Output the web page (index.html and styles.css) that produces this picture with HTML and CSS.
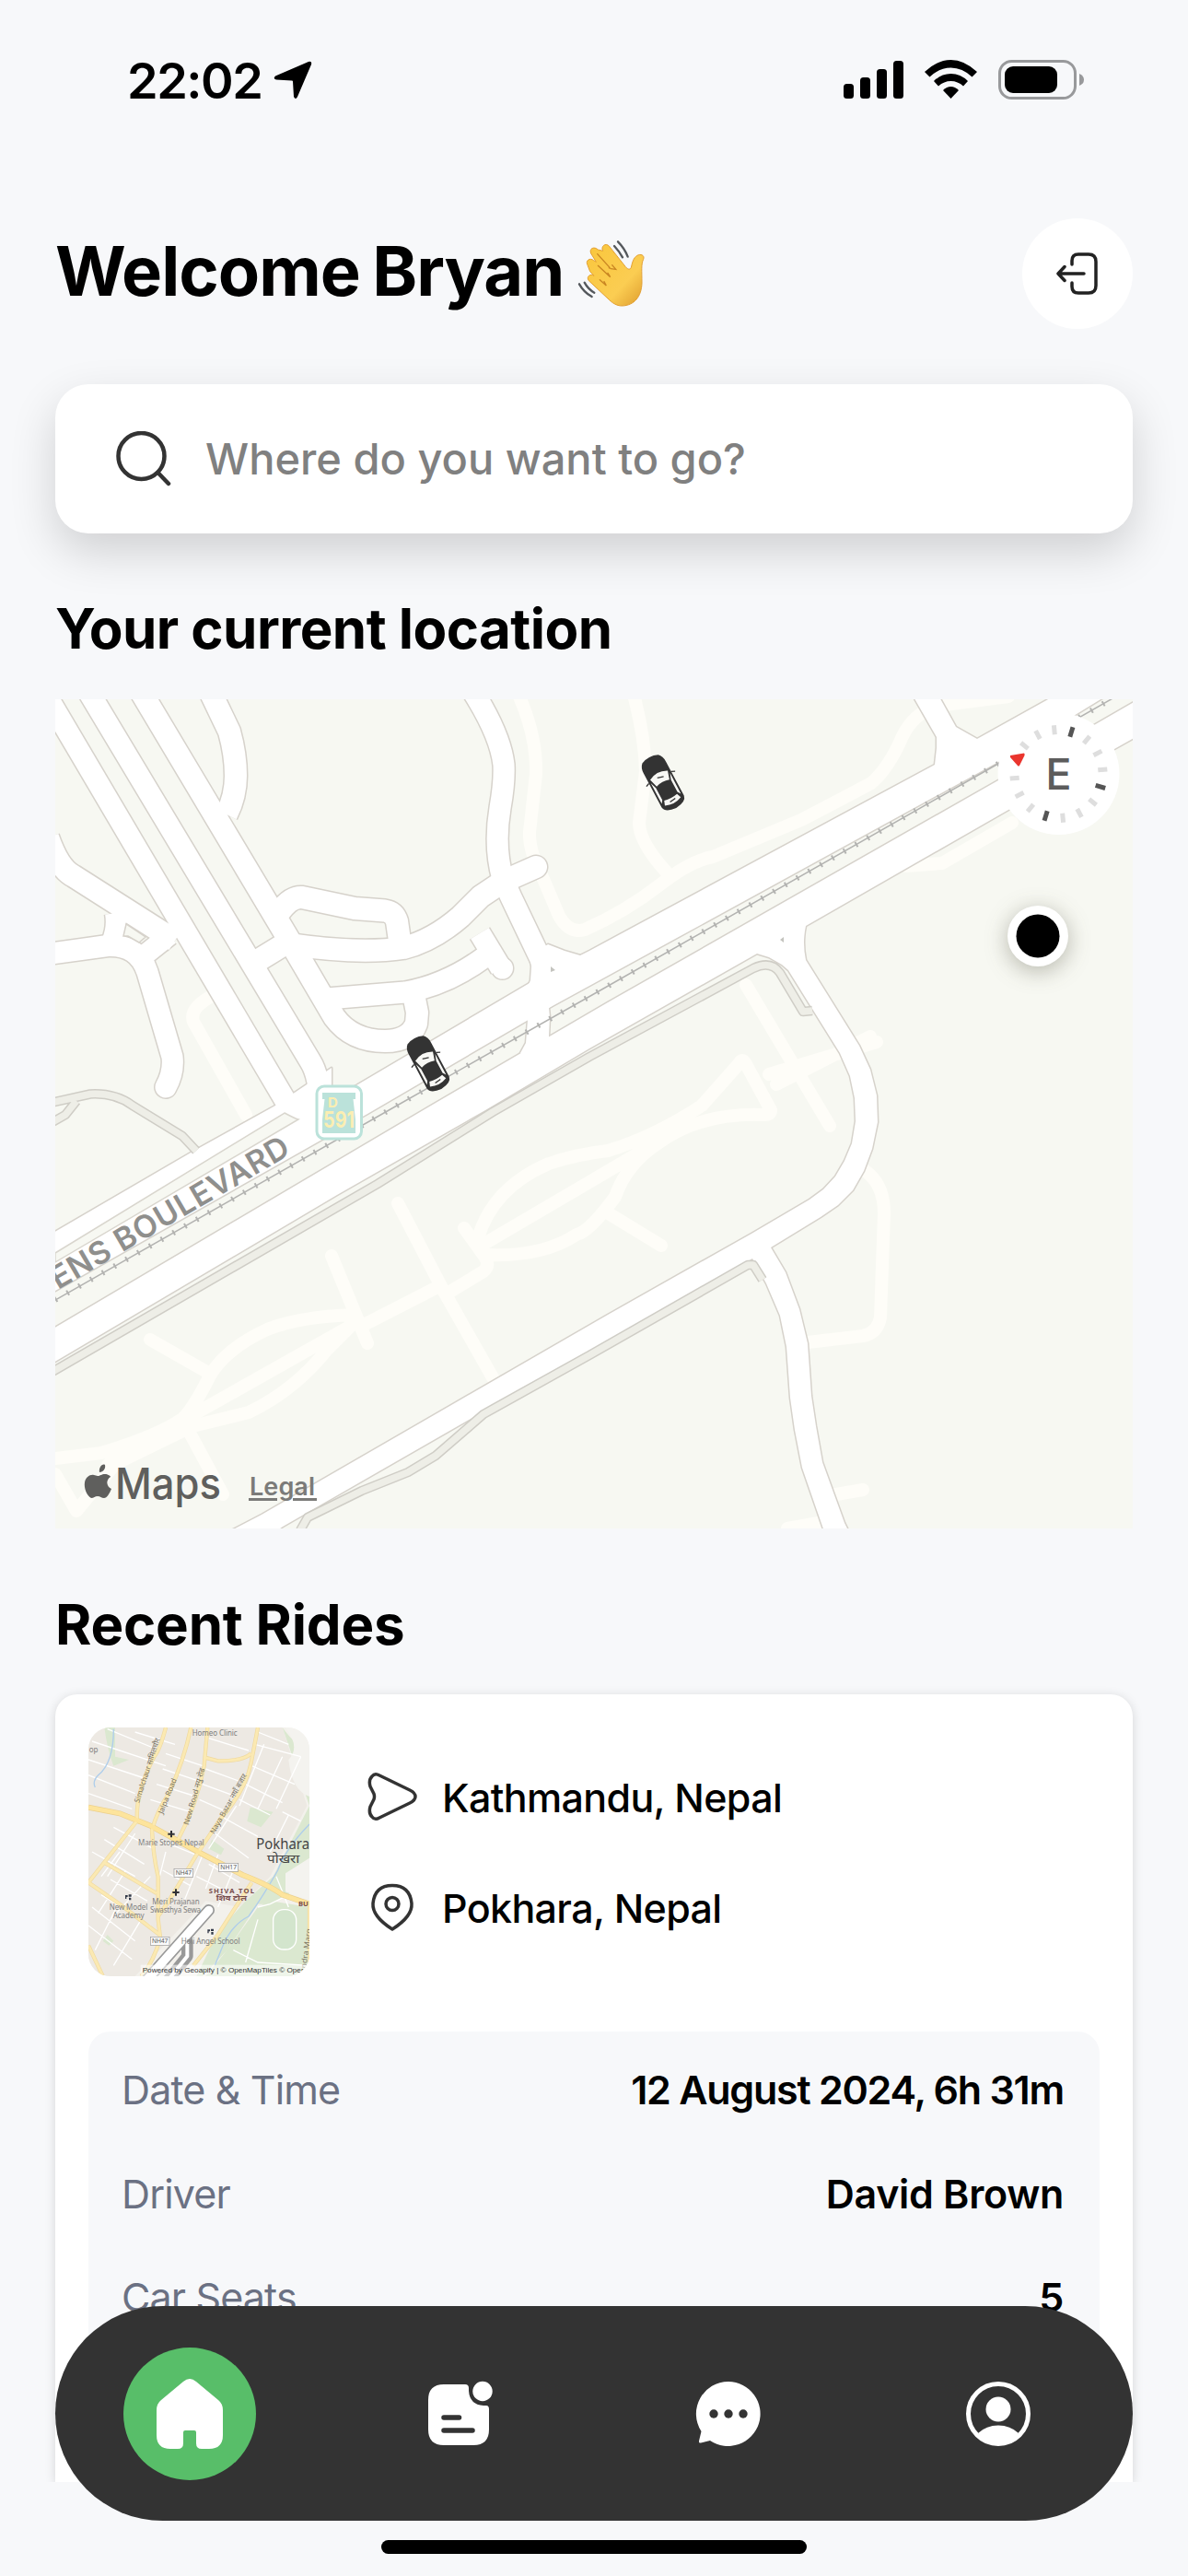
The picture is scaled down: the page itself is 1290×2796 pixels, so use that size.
FILE: index.html
```html
<!DOCTYPE html>
<html lang="en">
<head>
<meta charset="utf-8">
<title>Ride home</title>
<link rel="stylesheet" href="styles.css">
</head>
<body>
<div class="screen">
  <div class="status">
    <div class="status-left">
      <span class="time">22:02</span>
      <svg class="loc" viewBox="0 0 42 42"><path d="M38 1Q42 0 41 4L26 39Q24 43 22 39L21 22.500Q21 21.500 20 21.500L3 20.500Q-1 19.500 2 16.500Z"/></svg>
    </div>
    <svg class="status-icons" viewBox="0 0 264 44">
      <rect x="0" y="26" width="11" height="16" rx="3.500"/><rect x="18" y="19" width="11" height="23" rx="3.500"/><rect x="36" y="10" width="11" height="32" rx="3.500"/><rect x="54" y="1" width="11" height="41" rx="3.500"/>
      <path d="M88 13Q102 0 116.500 0T145 13L139.500 18.500Q129 8.500 116.500 8.500T93.500 18.500Z"/>
      <path d="M98 23Q106 15 116.500 15T135 23L130 28.500Q124 23 116.500 23T103 28.500Z"/>
      <path d="M108 33Q112 29 116.500 29T125 33L116.500 42Z"/>
      <rect class="bat-case" x="169.500" y="1.500" width="82" height="40" rx="13"/>
      <rect x="175" y="7" width="57" height="29" rx="9"/>
      <path class="bat-tip" d="M256 15Q261 17 261 21.500T256 28Z"/>
    </svg>
  </div>

  <header class="header">
    <h1>Welcome Bryan</h1>
    <svg class="wave" viewBox="0 0 330 300">
      <defs><linearGradient id="skin" x1="0" y1="0" x2="1" y2="1"><stop offset="0" stop-color="#f9c63c"/><stop offset=".65" stop-color="#fbcd52"/><stop offset="1" stop-color="#dd9b2c"/></linearGradient></defs>
      <path class="hand" d="M134 76C126 62 142 48 154 60L208 128C216 138 225 138 227 126C231 108 236 94 250 89C262 86 270 93 266 103C258 120 261 140 261 180C260 225 236 254 196 255C178 255 164 245 150 231L88 173C78 160 94 148 105 157L92 143L84 122C76 107 92 97 104 107L112 112L95 84C88 68 106 60 118 72Z"/>
      <path class="finger-line" d="M116 86L154 128Q160 135 154 131M160 134L176 136L164 122M118 124L158 161L150 148M124 170L145 189L138 176"/>
      <path class="motion" d="M171 60Q188 78 198 97M183 46Q205 68 215 95M57 184Q72 211 98 225M74 179Q86 201 106 212"/>
    </svg>
    <button class="logout" aria-label="Log out">
      <svg viewBox="0 0 48 48"><path d="M17 14V10Q17 3 24 3H35Q43 3 43 11V37Q43 45 35 45H24Q17 45 17 38V34M30 24H2M9 16.500L2 24L9 31.500"/></svg>
    </button>
  </header>

  <div class="search">
    <svg class="search-icon" viewBox="0 0 60 60"><circle cx="27.500" cy="27" r="25"/><path d="M45.500 45L57 57"/></svg>
    <span>Where do you want to go?</span>
  </div>

  <h2 class="loc-title">Your current location</h2>
  <svg class="map" viewBox="0 0 1170 900">
    <defs>
      <g id="roads">
        <path class="w23" d="M-19 -20L253 441"/>
        <path class="w23" d="M29 -20L277 393Q287 409 287 440"/>
        <path class="w24" d="M86 -20L252 258L303 345Q322 371 358 371Q385 371 392 352L393 340L388 315"/>
        <path class="w24" d="M165 -15L189 35Q196 60 196 83Q196 105 186 125"/>
        <path class="w24" d="M216 286L260 259"/>
        <path class="w24" d="M244 230Q256 214 268 215L325 227L358 229.500Q368 231 371 241L374 262"/>
        <path class="w24 cap" d="M255 266Q330 277 378 270Q410 262 440 236L462 214L486 198L522 182"/>
        <path class="w23" d="M446 -20Q483 35 487 71Q488 90 483 118Q476 160 486 195L495 215L528 284"/>
        <path class="w23" d="M295 325L380 318Q425 310 466 280"/>
        <path class="w23" d="M461 254L484 292"/><circle cx="485.500" cy="292" r="10"/>
        <path class="w24" d="M-8 150Q4 184 20 192L130 262"/>
        <path class="w22" d="M65 232Q68 250 60 266M94 280L124 256"/>
        <path class="w23 cap" d="M-5 276L57 267.500Q90 266 100 296L127 388Q129 405 120 421"/>
        <path class="poly" d="M515 278L535 266L553 273L570 278L610 290L536 335L537 345L536 366L540 400L505 384L511 373L513 348L500 340L516 305L517 290Z"/>
        <path class="poly" d="M-9 583L149 491L239 441L300 400L300 434L327 419L383 386L515 308L530 300L570 278L580 273L955 71L957 53L957 41L930 -6H958L978 30L1001 43L1089 -6H1145L1024 68L580 311L536 335L339 450L-9 647Z"/>
        <path class="poly" d="M-9 687L408 441L600 329L1024 88L1180 -2V37L1150 54L1035 120L815 246Q811 264 815 283L873 376L885 402L892 430L893 459L887 488L878 512L866 533L850 549L831 562L777 595L793 622L808 662L817 699L821 756L826 789L833 828L857 894L866 912H838L811 834L803 793L798 758L794 703L787 669L772 634L757 607L580 707L247 898L230 910H176L224 885L600 668L756 580L819 543L834 532L847 518L857 501L865 482L869 458L868 433L863 409L852 384L796 294L789 288L775 280L762 276L580 379L467 446L306 538L-9 724Z"/>
      </g>
      <g id="car">
        <path class="car-body" d="M-10 -34Q0 -39 10 -34Q14 -30 14 -22V26Q13 34 0 35Q-13 34 -14 26V-22Q-14 -30 -10 -34Z"/>
        <path class="car-glass" d="M-11 -11Q0 -18 11 -11L8 0Q0 -3 -8 0ZM-8 20Q0 22 8 20L10 26Q0 31 -10 26ZM-12 -7L-9.500 1V18L-12 22ZM12 -7L9.500 1V18L12 22Z"/>
        <path class="car-line" d="M-14 -8L-18 -6M14 -8L18 -6M-3 -9L4 -7M-3 25L4 24"/>
      </g>
      <path id="street" d="M3 641L290 474"/>
    </defs>
    <rect class="land" width="1170" height="900"/>
    <g class="faint">
      <path d="M0 824L50 818Q110 800 138 781Q150 770 168 734Q185 705 230 684Q265 670 325 668M149 777L330 675M57 831Q80 810 149 789L210 774Q260 750 295 706L325 676M103 695L168 732M300 604L339 699M337 678L415 638M372 547L421 641L476 738M427 644L465 621Q472 615 467 606L444 574M459 585Q475 530 536 504Q565 494 600 490Q650 475 702 441L742 396Q746 388 750 396L777 446Q777 451 770 451Q700 448 653 483Q620 505 608 540Q580 578 566 581Q530 605 471 603M464 592L580 524L653 481M599 557L658 593M750 310L841 463M775 407L892 372M783 418L885 366M147 798L182 863M0 841L23 881L65 830L149 789"/>
      <path d="M878 511Q900 525 900 558L896 671Q893 688 877 691L817 698M848 863L877 858M503 -5Q523 40 522 81L515 144Q514 165 530 195L547 235Q558 255 575 250Q620 230 657 201Q690 175 714 171L810 131Q860 105 886 91Q905 75 920 40Q935 10 966 6L1035 -3M628 -5Q640 40 641 78L634 134Q634 155 664 188M924 181L963 178L1039 134M172 321Q145 335 150 350L207 451M795 900L834 893"/>
    </g>
    <use href="#roads" class="casing"/>
    <use href="#roads" class="surface"/>
    <path class="strip" d="M0 601L249 449Q260 455 264 456L0 611Z"/>
    <path class="island" d="M77 244L98 258L91 264L79 257H74Z"/>
    <g class="lane-case">
      <path d="M-5 731L350 526L475 448L580 388L758 292Q777 283 787 297L812 339L822 338"/>
      <path d="M-5 438L38 428.500Q65 427 84 441L138 474L153 490M23 436L11 451L-5 460"/>
      <path d="M580 712L752 614H758L768 630M580 712L465 776L413 821L383 839L333 859L274 888L266 902"/>
    </g>
    <g class="lane">
      <path d="M-5 731L350 526L475 448L580 388L758 292Q777 283 787 297L812 339L822 338"/>
      <path d="M-5 438L38 428.500Q65 427 84 441L138 474L153 490M23 436L11 451L-5 460"/>
      <path d="M580 712L752 614H758L768 630M580 712L465 776L413 821L383 839L333 859L274 888L266 902"/>
    </g>
    <path class="rail" d="M0 652L371 441L597 313L1022 71L1150 -2"/>
    <path class="ties" d="M0 652L371 441L597 313L1022 71L1150 -2"/>
    <path class="mark" d="M538 290L543 294L538 296ZM787 261L791 258V264Z"/>
    <text class="street"><textPath href="#street" textLength="294">ENS BOULEVARD</textPath></text>
    <g class="shield">
      <rect x="284" y="420" width="48.500" height="57" rx="8"/>
      <path d="M290 427H326V434H323.500L326 456V471H290V456L292.500 434H290Z"/>
      <text x="296" y="443" class="s1">D</text><text x="291" y="465" class="s2" textLength="34" lengthAdjust="spacingAndGlyphs">591</text>
    </g>
    <use href="#car" transform="translate(660 91) rotate(-28) scale(.98 .87)"/>
    <use href="#car" transform="translate(405 396) rotate(-28) scale(.98 .87)"/>
    <g class="compass">
      <circle class="disc" cx="1089.500" cy="81" r="66"/>
      <g class="ticks" transform="translate(1089.500 81) rotate(17)">
        <path d="M0 -53V-42M0 53V42M53 0H42"/>
        <g class="pale"><path d="M20.300 -49L16.500 -39.700M37.500 -37.500L30.400 -30.400M49 -20.300L39.700 -16.500M49 20.300L39.700 16.500M37.500 37.500L30.400 30.400M20.300 49L16.500 39.700M-20.300 -49L-16.500 -39.700M-37.500 -37.500L-30.400 -30.400M-49 -20.300L-39.700 -16.500M-49 20.300L-39.700 16.500M-37.500 37.500L-30.400 30.400M-20.300 49L-16.500 39.700"/></g>
      </g>
      <path class="north" d="M1037 61L1052 58.500Q1053 59 1052.500 61L1047 72Q1046 73 1045 72L1037 63Z"/>
      <text x="1089.500" y="98">E</text>
    </g>
    <circle class="me" cx="1067" cy="257" r="33"/><circle cx="1067" cy="257" r="23.500"/>
    <g class="brand">
      <path d="M48 839C47 834 51 829 54 831C55 835 52 839 48 839ZM46 843C49 843 50 841 54 841C57 841 60 843 60 844C55 847 55 854 61 857C59 862 56 867 53 867C50 867 49 865 46 865C43 865 42 867 39 867C34 864 31 856 32 850C33 844 38 841 42 842Z"/>
      <text x="65" y="868" class="maps" textLength="115" lengthAdjust="spacingAndGlyphs">Maps</text>
      <text x="211" y="864" class="legal" textLength="71">Legal</text>
      <path class="legal-line" d="M210 868.500H241M258 868.500H284"/>
    </g>
  </svg>

  <h2 class="rides-title">Recent Rides</h2>
  <section class="card">
    <div class="route">
      <svg class="thumb" viewBox="48 75 720 810">
        <rect class="t-bg" x="48" y="75" width="720" height="810"/>
        <path class="t-blocks" d="M48 75H680L760 330L640 560L540 660L430 640L200 885H48Z"/>
        <path class="t-green" d="M680 75Q720 130 740 130L768 300V500L700 620L640 650H600L500 800L420 885H400L470 740L560 640L650 560L768 330ZM575 335L650 350L610 400L565 380ZM600 660L640 640L768 660V885H430L500 800ZM100 75H135V170L180 180L130 200Q110 150 100 75ZM450 440L490 470L480 490L440 470ZM110 750L130 770L115 785L95 770Z"/>
        <path class="t-field" d="M690 75H768V300Q710 280 700 180Q740 140 690 75ZM690 550L768 500V640L690 610Z"/>
        <path class="t-white" d="M48 230L200 290M48 180L230 240M60 120L300 200M110 80L280 150M48 290L190 340M200 90L330 130M300 160L420 200M290 210L410 250M270 260L400 300M250 310L380 350M430 210L540 250M420 260L530 300M410 310L500 350M440 110L570 150M590 130L740 170M580 200L720 260M560 260L680 320M540 310L640 360M600 90L700 130M490 370L600 430M460 420L570 500M530 330L440 470M620 130L540 330M680 170L600 340M740 170L660 340M130 400L260 470M100 440L230 520M60 480L200 560M150 480L90 560M200 420L110 560M170 540L80 680M250 560L120 700M90 620L250 720M60 660L200 770M48 720L190 830M120 570L240 640M140 660L70 800M220 700L130 850M300 480L270 600M290 540L380 590M300 450L400 490M420 490L360 640M440 520L540 580M400 560L500 610M470 490L430 600M520 540L470 660M700 360L640 480M680 350L740 380M600 700L560 840M600 660L640 650L700 620M520 800L600 840L768 850M660 560L700 660"/>
        <path class="t-river" d="M768 390Q690 470 665 540Q620 620 570 690Q510 720 480 800L460 850M130 80Q130 190 80 230Q60 250 70 270"/>
        <g class="t-ycase"><path d="M300 75Q280 150 262 170Q200 290 207 378M382 75Q360 180 310 290Q270 350 255 410Q260 500 275 560V700L282 760Q260 840 220 885M436 75L425 200Q400 330 340 440M600 75L578 190Q560 280 480 370L400 490L310 640L275 690M425 172L470 184Q550 185 578 160M207 378L48 580L150 650L280 750M100 515L270 615M580 580Q540 640 470 750L390 850M48 785L95 885M768 640V885"/><path class="main" d="M48 335L150 355L250 395L405 480L550 555Q640 590 680 620L768 650"/></g>
        <g class="t-yellow"><path d="M300 75Q280 150 262 170Q200 290 207 378M382 75Q360 180 310 290Q270 350 255 410Q260 500 275 560V700L282 760Q260 840 220 885M436 75L425 200Q400 330 340 440M600 75L578 190Q560 280 480 370L400 490L310 640L275 690M425 172L470 184Q550 185 578 160M207 378L48 580L150 650L280 750M100 515L270 615M580 580Q540 640 470 750L390 850M48 785L95 885M768 640V885"/><path class="main" d="M48 335L150 355L250 395L405 480L550 555Q640 590 680 620L768 650"/></g>
        <path class="t-run1" d="M440 670L240 895M370 775V820L310 895"/><path class="t-run2" d="M440 670L240 895"/>
        <path class="t-run3" d="M370 775V820L310 895"/>
        <rect class="t-track" x="650" y="668" width="75" height="130" rx="34"/>
        <g class="t-road-names">
          <text transform="translate(213 322) rotate(-72)" textLength="220" lengthAdjust="spacingAndGlyphs">Simalchaur सामिलचौर</text>
          <text transform="translate(290 358) rotate(-68)" textLength="122" lengthAdjust="spacingAndGlyphs">Jalpa Road</text>
          <text transform="translate(374 394) rotate(-74)" textLength="192" lengthAdjust="spacingAndGlyphs">New Road नयु रोड</text>
          <text transform="translate(458 424) rotate(-61)" textLength="220" lengthAdjust="spacingAndGlyphs">Naya Bazar नयाँ बजार</text>
          <text transform="translate(757 860) rotate(-82)" textLength="130" lengthAdjust="spacingAndGlyphs">ndra Marg</text>
        </g>
        <g class="t-poi">
          <text x="386" y="102" textLength="147">Homeo Clinic</text><text x="50" y="157">op</text>
          <text x="210" y="460" textLength="215">Marie Stopes Nepal</text>
          <text x="256" y="650" textLength="154">Meri Prajanan</text><text x="249" y="679" textLength="165">Swasthya Sewa</text>
          <text x="116" y="668" textLength="125">New Model</text><text x="128" y="696" textLength="102">Academy</text>
          <text x="350" y="779" textLength="192">Holi Angel School</text>
        </g>
        <path class="t-cross" d="M307 422H329M318 411V433M322 612H344M333 601V623"/>
        <path class="t-school" d="M168 621H176V627H172V633H168ZM179 619H188V626H179ZM180 629H187V637H180ZM436 733H444V739H440V745H436ZM447 731H456V738H447ZM448 741H455V749H448Z"/>
        <g class="t-ref"><rect x="327" y="535" width="62" height="27"/><rect x="472" y="517" width="64" height="27"/><rect x="250" y="757" width="62" height="27"/><text x="332" y="556" textLength="52">NH47</text><text x="478" y="538" textLength="53">NH17</text><text x="255" y="778" textLength="52">NH47</text></g>
        <text class="t-city" x="595" y="471" textLength="173" lengthAdjust="spacingAndGlyphs">Pokhara</text><text class="t-city2" x="630" y="516" textLength="106" lengthAdjust="spacingAndGlyphs">पोखरा</text>
        <g class="t-area"><text x="440" y="614" textLength="148">SHIVA TOL</text><text x="464" y="640" textLength="100" lengthAdjust="spacingAndGlyphs">शिव टोल</text><text x="732" y="656">BU</text></g>
        <rect class="t-strip" x="218" y="848" width="560" height="37"/>
        <text class="t-credit" x="224" y="872" textLength="525" lengthAdjust="spacingAndGlyphs">Powered by Geoapify | © OpenMapTiles © Oper</text>
      </svg>
      <div class="places">
        <div class="place">
          <svg viewBox="0 0 54 54"><path d="M13 4Q8 1 5 5Q1 9 3 16L7 24Q8 27 7 30L3 38Q1 45 5 49Q8 53 13 50L46 34Q52 31 52 27T46 20Z"/></svg>
          <span>Kathmandu, Nepal</span>
        </div>
        <div class="place">
          <svg viewBox="0 0 54 54"><path d="M27 51Q5 37 6 23Q8 3.500 27 3.500T48 23Q49 37 27 51Z"/><circle cx="27" cy="23.500" r="7"/></svg>
          <span>Pokhara, Nepal</span>
        </div>
      </div>
    </div>
    <div class="details">
      <div class="row"><span class="label">Date &amp; Time</span><span class="value date">12 August 2024, 6h 31m</span></div>
      <div class="row"><span class="label">Driver</span><span class="value">David Brown</span></div>
      <div class="row"><span class="label">Car Seats</span><span class="value">5</span></div>
      <div class="row"></div>
    </div>
  </section>

  <nav class="tabs">
    <a class="tab active"><svg viewBox="0 0 78 78"><path d="M32 4Q39 -2 46 4L70 24Q75 28 75 35V62Q75 77 60 77H52Q46 77 46 71V59Q46 57 44 57H34Q32 57 32 59V71Q32 77 26 77H18Q3 77 3 62V35Q3 28 8 24Z"/></svg></a>
    <a class="tab"><svg viewBox="0 0 78 78"><path d="M22 7H45Q49 7 49 11V14Q50 29 65 30H68Q71 30 71 34V56Q71 73 54 73H22Q5 73 5 56V24Q5 7 22 7Z"/><circle cx="64" cy="14.500" r="10.700"/><path class="ink" d="M22 43H38.500M22 57H53"/></svg></a>
    <a class="tab"><svg viewBox="0 0 78 78"><path d="M39 4A35 35 0 1 1 19 68L9 70.500Q6.500 71 7 68.500L9.500 58A35 35 0 0 1 39 4Z"/><g class="dot"><circle cx="23" cy="39" r="4.700"/><circle cx="39" cy="39" r="4.700"/><circle cx="55" cy="39" r="4.700"/></g></svg></a>
    <a class="tab"><svg viewBox="0 0 78 78"><circle class="ring" cx="39" cy="39" r="32.500"/><circle cx="39" cy="34" r="13.500"/><path d="M17 60Q26 51.500 39 51.500T61 60Q52 72 39 72T17 60Z"/></svg></a>
  </nav>
  <div class="home-bar"></div>
</div>
</body>
</html>
```
FILE: styles.css
```css
* { box-sizing: border-box; }
body { margin: 0; background: #f7f8fa; font-family: Inter, "Liberation Sans", sans-serif; color: #000; }
.screen { position: relative; width: 1290px; height: 2796px; overflow: hidden; padding: 0 60px; }
h1, h2 { margin: 0; font-weight: 700; white-space: nowrap; }

.status { height: 237px; padding: 65px 50px 0 78px; display: flex; justify-content: space-between; align-items: flex-start; }
.status-left { display: flex; align-items: center; gap: 13px; height: 44px; }
.time { font-size: 54px; font-weight: 600; width: 146px; letter-spacing: -1.5px; white-space: nowrap; }
.loc { width: 42px; height: 42px; }
.status-icons { width: 264px; height: 44px; }
.bat-case { fill: none; stroke: #98999b; stroke-width: 3; }
.bat-tip { fill: #98999b; }

.header { height: 120px; display: flex; align-items: center; }
h1 { font-size: 74px; letter-spacing: -1px; word-spacing: -3px; width: 552px; line-height: 90px; padding-bottom: 6px; }
.wave { width: 110px; height: 100px; margin-left: -2px; }
.hand { fill: url(#skin); stroke: #e3a033; stroke-width: 3; }
.finger-line { fill: none; stroke: #c98522; stroke-width: 4; stroke-linecap: round; }
.motion { fill: none; stroke: #54585c; stroke-width: 7; stroke-linecap: round; }
.logout { margin-left: auto; width: 120px; height: 120px; padding: 0 0 0 2px; border: 0; border-radius: 50%; background: #fff; display: grid; place-items: center; }
.logout svg { width: 48px; height: 48px; fill: none; stroke: #222; stroke-width: 3.5; stroke-linecap: round; stroke-linejoin: round; }

.search { margin-top: 60px; height: 162px; border-radius: 36px; background: #fff; box-shadow: 0 20px 50px rgba(0,0,0,.16); display: flex; align-items: center; padding-left: 66px; gap: 37px; font-size: 47px; font-weight: 500; color: #808080; }
.search-icon { width: 60px; height: 60px; fill: none; stroke: #333; stroke-width: 4.500; stroke-linecap: round; }
.search span { letter-spacing: 0; padding-bottom: 2px; }

h2 { font-size: 60px; line-height: 72px; letter-spacing: -.55px; }
.loc-title { margin: 67px 0 41px; }
.rides-title { margin: 68px 0 40px; letter-spacing: -.2px; }

.map { display: block; width: 1170px; height: 900px; }
.land { fill: #f7f8f2; }
.faint { fill: none; stroke: #fefdf8; stroke-width: 14; stroke-linecap: round; stroke-linejoin: round; }
.casing { --c: 3px; stroke: #d6d2cb; fill: #d6d2cb; }
.surface { --c: 0px; stroke: #fff; fill: #fff; }
#roads path { stroke-linejoin: round; }
#roads .w22, #roads .w23, #roads .w24 { fill: none; }
#roads .w22 { stroke-width: calc(22px + var(--c)); }
#roads .w23 { stroke-width: calc(23px + var(--c)); }
#roads .w24 { stroke-width: calc(24px + var(--c)); }
#roads circle { stroke-width: calc(3px + var(--c)); }
#roads .poly { stroke-width: var(--c); }
#roads .cap { stroke-linecap: round; }
.strip { fill: #f7f8f2; stroke: #d9d6ce; stroke-width: 1.500; }
.island { fill: #f7f8f2; stroke: #d6d2cb; stroke-width: 1.500; }
.lane, .lane-case { fill: none; stroke-linejoin: round; }
.lane-case { stroke: #cfcdc6; stroke-width: 10.500; }
.lane { stroke: #eeeee7; stroke-width: 7.500; }
.rail { fill: none; stroke: #b3b3b1; stroke-width: 1.500; }
.ties { fill: none; stroke: #b3b3b1; stroke-width: 6; stroke-dasharray: 2 12.700; }
.mark { fill: #c4c4bf; }
.street { font-size: 34px; font-weight: 600; fill: #8f8f8d; }
.shield rect { fill: #fff; stroke: #bbe2da; stroke-width: 3; }
.shield path { fill: #bbe2da; }
.shield text { fill: #fbeeb2; font-weight: 700; }
.s1 { font-size: 15px; }
.s2 { font-size: 24px; }
.car-body { fill: #333; }
.car-glass { fill: #f8f8f5; }
.car-line { fill: none; stroke: #333; stroke-width: 1.500; }
.disc { fill: #fff; }
.ticks { fill: none; stroke: #555; stroke-width: 5; }
.pale { stroke: #dedede; }
.north { fill: #ea352e; }
.compass text { font-size: 47px; font-weight: 500; fill: #5c5c5c; text-anchor: middle; }
.me { fill: #fff; filter: drop-shadow(0 5px 12px rgba(60,60,40,.35)); }
.brand { fill: #5f5f5d; }
.maps { font-size: 47px; font-weight: 500; }
.legal { font-size: 27px; font-weight: 600; fill: #7b7b79; }
.legal-line { stroke: #7b7b79; stroke-width: 3; }

.card { background: #fff; height: 855px; border-radius: 24px 24px 0 0; padding: 36px; box-shadow: 0 2px 12px rgba(0,0,0,.14); clip-path: inset(-20px -20px 0 -20px); overflow: hidden; }
.route { display: flex; gap: 63px; align-items: center; height: 270px; }
.thumb { width: 240px; height: 270px; border-radius: 24px; }
.places { display: flex; flex-direction: column; gap: 72px; }
.place { display: flex; align-items: center; gap: 27px; height: 48px; font-size: 43px; font-weight: 500; white-space: nowrap; }
.place svg { width: 54px; height: 54px; fill: none; stroke: #333; stroke-width: 3.500; stroke-linejoin: round; }
.place span { padding-top: 2px; letter-spacing: -.65px; }
.details { margin-top: 60px; background: #f7f8fa; border-radius: 24px; padding: 7px 39px 0 36px; height: 500px; }
.row { height: 112.600px; display: flex; align-items: center; justify-content: space-between; font-size: 43px; white-space: nowrap; }
.label { color: #6b7183; letter-spacing: -.85px; }
.value { font-weight: 600; letter-spacing: -.3px; }
.date { letter-spacing: -1.250px; }

.t-bg { fill: #f3f1ec; }
.t-blocks { fill: #ede9e3; }
.t-green { fill: #dbe8d0; }
.t-field { fill: #f4f3ef; }
.t-white { fill: none; stroke: #fff; stroke-width: 4; }
.t-river { fill: none; stroke: #aecdeb; stroke-width: 4; }
.t-ycase, .t-yellow { fill: none; }
.t-ycase { stroke: #efd99f; stroke-width: 13; }
.t-yellow { stroke: #fbe9b2; stroke-width: 9; }
.t-ycase .main { stroke-width: 18; stroke: #ecd08c; }
.t-yellow .main { stroke-width: 14; stroke: #fde49c; }
.t-run1 { fill: none; stroke: #999; stroke-linecap: round; stroke-linejoin: round; stroke-width: 38; }
.t-run2 { fill: none; stroke: #fff; stroke-width: 28; stroke-linecap: round; }
.t-run3 { fill: none; stroke: #fff; stroke-width: 12; }
.t-track { fill: #d3e5cd; stroke: #fff; stroke-width: 4; }
.thumb text { font-family: "Noto Sans", "Open Sans", sans-serif; }
.t-road-names { font-size: 24px; fill: #77705f; }
.t-poi { font-size: 24px; fill: #808080; }
.t-cross { stroke: #2f3036; stroke-width: 6; }
.t-school { fill: #333a48; }
.t-ref rect { fill: #fafafa; stroke: #999; stroke-width: 2; }
.t-ref { font-size: 20px; fill: #555; }
.t-city { font-size: 46px; fill: #444; }
.t-city2 { font-size: 36px; fill: #444; }
.t-area { font-size: 23px; font-weight: 700; fill: #784d4d; }
.t-strip { fill: #fff; opacity: .55; }
.thumb .t-credit { font-family: "Liberation Sans", sans-serif; font-size: 24px; fill: #333; }

.tabs { position: absolute; left: 60px; right: 60px; top: 2503px; height: 233px; border-radius: 117px; background: #333; display: flex; justify-content: space-around; align-items: center; }
.tab { width: 144px; height: 144px; border-radius: 50%; display: grid; place-items: center; }
.tab.active { background: #58be69; }
.tab svg { width: 78px; height: 78px; fill: #fff; }
.ink { stroke: #333; stroke-width: 5.500; stroke-linecap: round; }
.dot { fill: #333; }
.ring { fill: none; stroke: #fff; stroke-width: 5; }
.home-bar { position: absolute; left: 414px; top: 2757px; width: 462px; height: 15px; border-radius: 8px; background: #000; }
```
